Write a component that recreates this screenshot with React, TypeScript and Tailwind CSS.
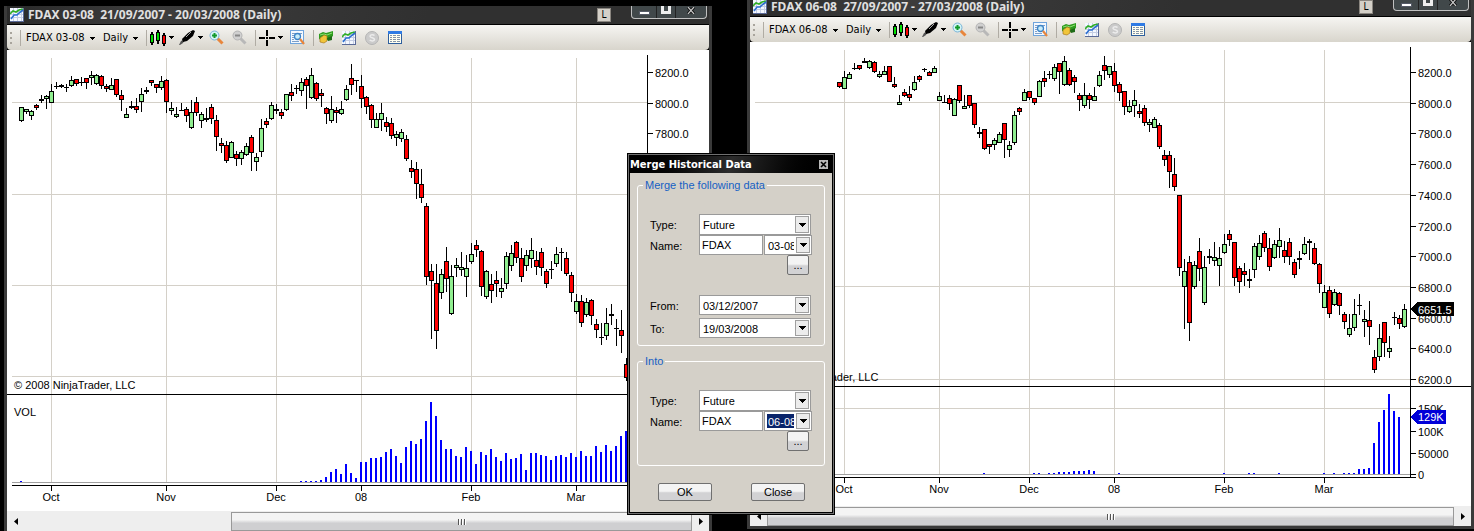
import React, { useState } from "react";

// Each bar: body top, body bottom, high, low, then u (up), d (down) or n (no change)
const MARCH_BARS = `107 121 107 122 u,109 112 109 114 u,111 116 110 120 u,105 108 104 110 d,99 101 95 103 n,96 99 95 109 u,91 103 84 103 u,
86 87 82 89 n,85 87 84 88 n,87 88 84 92 n,80 86 76 87 u,79 84 79 86 d,82 83 77 86 n,78 83 78 89 d,75 78 71 85 u,75 84 74 85 u,
76 86 75 89 d,86 89 84 92 d,85 90 78 90 u,79 95 79 97 d,95 100 90 111 d,114 118 108 118 u,106 108 101 109 n,106 110 98 113 d,
94 102 88 112 u,90 92 87 94 n,80 83 80 86 d,84 88 84 93 d,81 88 76 90 u,80 102 79 113 d,108 111 102 115 u,114 117 107 118 u,
110 111 103 111 n,109 116 107 122 d,112 128 100 129 u,102 113 97 116 d,114 121 112 128 u,118 120 108 122 n,107 119 104 124 d,
120 137 115 151 d,143 146 138 153 d,145 161 141 163 d,142 158 141 158 u,154 159 151 166 d,152 159 150 165 u,146 155 143 156 u,
137 153 135 171 d,157 162 153 171 u,128 152 119 157 u,121 125 118 128 d,105 119 102 120 u,109 111 104 114 n,112 116 109 119 d,
94 110 94 111 u,92 96 84 101 d,88 89 85 94 n,82 91 78 96 u,79 86 77 109 d,75 98 68 99 u,83 99 82 101 d,93 96 89 107 d,
108 114 107 124 d,109 121 96 123 u,110 113 107 123 d,109 114 101 115 u,89 100 85 101 u,78 85 64 95 d,80 81 80 92 n,86 99 75 108 d,
97 107 96 114 d,105 120 104 128 d,119 128 113 128 u,113 120 103 131 u,122 127 117 132 d,123 136 118 139 d,134 138 131 146 u,
132 139 129 142 u,139 159 135 161 d,168 172 160 178 d,169 184 162 199 d,184 198 169 203 d,206 277 203 285 d,271 281 264 339 d,
283 331 264 349 d,274 293 269 299 u,261 279 247 292 d,276 314 265 315 u,265 268 258 277 u,267 270 252 276 u,268 277 255 297 u,
254 262 243 264 u,245 250 240 257 d,251 287 250 296 d,271 297 270 299 u,284 291 274 303 d,280 284 271 297 d,288 292 278 298 u,
256 284 252 289 u,253 266 245 271 u,242 258 241 263 d,258 277 248 282 d,255 266 250 271 u,250 259 238 268 u,260 267 251 275 d,
252 268 248 276 d,271 284 269 288 d,269 270 261 279 n,254 264 247 267 u,252 253 248 271 n,258 274 252 276 d,275 293 272 302 d,
301 312 294 314 u,301 323 295 327 d,302 315 298 317 u,300 316 299 325 d,324 330 319 338 d,337 338 323 345 n,323 336 308 340 u,
314 316 304 325 n,328 329 319 346 n,330 336 310 353 d,364 378 358 381 d`;

const JUNE_BARS = `82 87 82 88 d,77 89 71 89 u,74 79 72 79 u,68 69 63 70 n,65 69 65 70 d,61 63 58 63 n,61 68 60 69 u,62 72 61 73 d,
74 77 71 78 u,71 75 66 75 u,66 82 66 82 d,84 87 77 88 d,102 105 95 105 u,92 96 89 97 d,94 98 86 101 d,82 90 76 91 u,76 80 75 82 d,
69 70 68 72 n,72 76 71 76 d,68 73 66 73 u,96 101 92 101 u,102 103 95 103 n,98 104 95 110 d,99 116 98 116 u,85 101 85 103 d,
106 109 95 109 u,95 106 95 108 d,103 125 103 128 d,132 134 127 138 n,129 149 129 150 d,144 147 144 154 d,140 145 138 150 u,
134 143 132 143 u,123 140 123 158 d,145 150 141 157 u,115 143 111 145 u,108 112 107 115 d,92 101 89 101 u,91 98 91 100 d,
98 103 98 105 d,81 97 80 97 u,78 82 71 87 d,74 75 71 79 n,67 79 64 81 u,63 72 63 94 d,61 85 56 86 u,70 85 68 86 d,77 82 75 93 d,
95 100 93 111 d,95 106 83 108 u,95 100 93 109 d,96 101 87 101 u,75 86 71 87 u,65 71 56 80 d,66 75 66 78 u,71 86 63 92 d,
84 93 82 101 d,91 107 91 115 d,106 112 100 113 u,100 106 90 117 u,111 114 104 118 d,108 123 105 126 d,122 125 119 132 u,
119 128 117 128 u,125 147 123 149 d,155 160 150 166 d,155 172 151 188 d,174 187 158 191 d,195 268 195 276 d,271 287 259 329 u,
262 323 256 341 d,265 287 261 289 u,251 269 238 281 d,267 303 256 305 u,256 258 249 264 n,257 261 242 266 u,258 266 247 286 u,
244 253 234 254 u,234 240 230 246 d,242 278 242 286 d,268 282 266 293 d,271 275 263 286 d,279 281 269 288 n,246 270 243 278 u,
243 257 235 260 u,233 248 231 252 d,248 267 238 271 d,244 258 240 259 u,240 247 228 258 u,250 257 241 263 d,242 257 238 265 d,
262 275 259 278 d,258 260 251 269 n,244 254 237 255 u,241 243 239 260 n,248 264 243 265 d,264 284 263 293 d,292 308 285 308 u,
290 314 286 318 d,292 305 289 306 u,293 306 292 315 d,314 322 312 329 d,328 335 314 337 u,314 328 299 331 u,305 306 294 315 n,
319 322 310 337 u,320 327 301 345 d,357 370 350 373 d,338 357 324 361 u,322 343 322 357 d,348 352 336 358 u,317 318 312 325 n,
318 324 315 329 d,309 327 304 328 u`;

// Volume bars: index of the first bar, then heights
const MARCH_VOLUME: [number, number[]][] = [
  [0, [1]],
  [
    56,
    [
      1, 1, 1, 1, 2, 5, 10, 13, 8, 18, 9, 4, 20, 20, 24, 24, 25, 30, 33, 26, 19, 35, 41, 38, 43, 61, 80, 66, 42, 33, 33,
      26, 25, 35, 31, 18, 30, 27, 33, 25, 21, 29, 23, 24, 28, 12, 29, 29, 27, 26, 22, 26, 27, 25, 29, 25, 31, 26, 26,
      36, 30, 37, 31, 36, 46, 51,
    ],
  ],
];

const JUNE_VOLUME: [number, number[]][] = [
  [29, [1]],
  [39, [1, 1, 0, 1, 1, 2, 2, 2, 3, 3, 3, 4, 3]],
  [56, [1]],
  [77, [1, 0, 0, 0, 0, 1, 1, 0, 0, 0, 0, 1]],
  [97, [1, 0, 1, 0, 1, 1, 1, 5, 5, 6, 31, 52, 64, 80, 63, 57]],
];

interface ChartProps {
  bars: string;
  volume: [number, number[]][];
  left: number;
  top: number;
  right: number;
  firstX: number;
  axisX: number;
  gridTop: number;
  months: [number, string][];
  prices: number[];
  gridLines: number[];
  split: number;
  volumeGrid?: number;
  zero: number;
  volumeTicks: [number, string][];
  credit: number;
  children?: React.ReactNode;
}

const Chart: React.FC<ChartProps> = (props) => {
  const { left, top, right, firstX, axisX, gridTop, split, zero } = props;

  return (
    <svg
      className="block w-full grow bg-white text-[11px]"
      fontFamily='"Liberation Sans", Arial, sans-serif'
      shapeRendering="crispEdges"
    >
      <g transform={`translate(${-left} ${-top})`}>
        {/* Grid */}
        <g fill="#d4d0c8">
          {props.months.map(([x]) => (
            <rect key={x} x={x} y={gridTop} width={1} height={zero - gridTop} />
          ))}
          {props.gridLines.map((y) => (
            <rect key={y} x={left + 5} y={y} width={axisX - left - 5} height={1} />
          ))}
          {props.volumeGrid && (
            <rect x={left + 5} y={props.volumeGrid} width={axisX - left - 5} height={1} />
          )}
        </g>

        {/* Axes */}
        <rect x={left} y={split} width={right - left} height={1} />
        <rect x={left + 5} y={zero} width={axisX - left + 1} height={1} fill="#a0a0a0" />
        <rect x={left + 5} y={zero + 3} width={axisX - left + 1} height={1} />
        <rect x={axisX} y={gridTop - 3} width={1} height={zero + 6 - gridTop} />
        {props.months.map(([x, label]) => (
          <g key={x}>
            <rect x={x} y={zero + 3} width={1} height={6} />
            <text x={x} y={zero + 19} textAnchor="middle">
              {label}
            </text>
          </g>
        ))}
        {props.prices.map((price, i) => {
          const y = Math.round(72 + i * 30.7);
          return (
            <g key={price}>
              <rect x={axisX} y={y} width={6} height={1} />
              <text x={axisX + 8} y={y + 5}>
                {price.toFixed(1)}
              </text>
            </g>
          );
        })}
        {props.volumeTicks.map(([y, label]) => (
          <g key={label}>
            <rect x={axisX} y={y} width={6} height={1} />
            <text x={axisX + 8} y={y + 5}>
              {label}
            </text>
          </g>
        ))}

        {/* Candles */}
        {props.bars.split(",").map((bar, i) => {
          const [a, b, c, d, kind] = bar.trim().split(" ");
          const [bodyTop, bodyBottom, high, low] = [a, b, c, d].map(Number);
          const x = firstX + i * 5;
          return (
            <g key={i}>
              <rect x={x} y={high} width={1} height={low - high} />
              <rect x={x - 2} y={bodyTop} width={5} height={bodyBottom - bodyTop} />
              {kind !== "n" && (
                <rect
                  x={x - 1}
                  y={bodyTop + 1}
                  width={3}
                  height={bodyBottom - bodyTop - 2}
                  fill={kind === "u" ? "#90ee90" : "#ff0000"}
                />
              )}
            </g>
          );
        })}

        {/* Volume */}
        {props.volume.map(([start, heights]) =>
          heights.map((h, i) => (
            <rect key={start + i} x={firstX - 1 + (start + i) * 5} y={zero - h} width={2} height={h} fill="#0000ff" />
          ))
        )}

        <text x={left + 7} y={props.credit}>
          © 2008 NinjaTrader, LLC
        </text>
        <text x={left + 7} y={split + 22}>
          VOL
        </text>
        {props.children}
      </g>
    </svg>
  );
};

const ChartIcon: React.FC = () => (
  <svg width="14" height="14" viewBox="0 0 14 14" aria-hidden="true">
    <rect width="14" height="14" fill="#f4f8ff" />
    <path d="M0 3.5h14M0 6.5h14M0 9.5h14M3.5 0v14M7.5 0v14M11.5 0v14" stroke="#c4cde4" />
    <path d="M0 13.5h14M13.5 0v14" stroke="#5a6a98" />
    <path d="M0 6l3-3 3 1 3-2 4-1" fill="none" stroke="#2fae25" strokeWidth="1.6" />
    <path d="M1 11l3-4h3l2-2 4-3" fill="none" stroke="#2c6fd0" strokeWidth="1.6" />
  </svg>
);

const CandlesIcon: React.FC = () => (
  <svg width="16" height="16" viewBox="0 0 16 16" shapeRendering="crispEdges" aria-hidden="true">
    <path d="M1 2h2v13H1zM7 0h2v14H7zM13 3h2v13h-2z" />
    <path d="M0 4h4v9H0zM6 2h4v9H6zM12 5h4v9h-4z" />
    <path d="M1 5h2v7H1zM7 3h2v7H7z" fill="#00e000" />
    <path d="M13 6h2v7h-2z" fill="#ff0000" />
  </svg>
);

const PenIcon: React.FC = () => (
  <svg width="16" height="16" viewBox="0 0 16 16" aria-hidden="true">
    <path d="M0 15l2-4 2-1 1 1-1 2-3 2z" fill="#555" />
    <path d="M3 9l6-6 5-3 2 1-2 5-6 5-4 1z" />
    <path d="M7 7l5-5" stroke="#aaa" />
  </svg>
);

const ZoomIcon: React.FC<{ dim?: boolean }> = ({ dim }) => (
  <svg width="15" height="15" viewBox="0 0 15 15" aria-hidden="true">
    <path d="M8.5 8.500l5 5" stroke={dim ? "#b8b8b8" : "#e8863c"} strokeWidth="3" />
    <circle cx="5.500" cy="5.500" r="4.500" fill={dim ? "#d0d0d0" : "#d4f3f4"} stroke={dim ? "#b4b4b4" : "#7ab4d8"} />
    <path d={dim ? "M3 5.500h5" : "M3 5.500h5M5.500 3v5"} stroke={dim ? "#888" : "#129a2c"} strokeWidth="2" />
  </svg>
);

const CrossIcon: React.FC = () => (
  <svg width="16" height="16" viewBox="0 0 16 16" shapeRendering="crispEdges" aria-hidden="true">
    <path d="M0 7h6v2H0zM10 7h6v2h-6zM7 0h2v6H7zM7 10h2v6H7zM7 7h2v2H7z" />
  </svg>
);

const DataBoxIcon: React.FC = () => (
  <svg width="15" height="15" viewBox="0 0 15 15" aria-hidden="true">
    <rect x=".5" y=".5" width="13" height="13" fill="#f4f9ff" stroke="#6fa4dc" />
    <path d="M2 3.500h10M2 5.500h2M2 7.500h2M2 9.500h2M2 11.500h7" stroke="#7d9fc8" />
    <circle cx="7.500" cy="6.500" r="3" fill="#c8ecf8" stroke="#3c84c8" strokeWidth="1.300" />
    <path d="M10 9l4 5" stroke="#e8863c" strokeWidth="2.200" />
  </svg>
);

const MoneyIcon: React.FC = () => (
  <svg width="15" height="15" viewBox="0 0 15 15" aria-hidden="true">
    <path d="M0 4l4-2 3 1 7-2v5l-5 4-5 1-4-2z" fill="#2e9c1f" />
    <path d="M1 5l4-1 3 1 5-2" fill="none" stroke="#8ee070" />
    <path d="M1 8l4-3 3 1v5l-3 2-4-1z" fill="#f1c53a" stroke="#a8781c" strokeWidth=".7" />
    <path d="M8 8l5-2v4l-4 1z" fill="#1f6b18" />
  </svg>
);

const CoinIcon: React.FC = () => (
  <svg width="14" height="14" viewBox="0 0 14 14" aria-hidden="true">
    <circle cx="7" cy="7" r="6.500" fill="#cbcbcb" stroke="#b4b4b4" />
    <path d="M9.500 4.500c-1-1-4.500-1.200-4.500.7 0 2 4.500 1.200 4.500 3.300 0 1.900-3.600 1.700-4.800.5" fill="none" stroke="#ececec" strokeWidth="1.500" />
  </svg>
);

const TableIcon: React.FC = () => (
  <svg width="14" height="14" viewBox="0 0 14 14" shapeRendering="crispEdges" aria-hidden="true">
    <rect width="14" height="13" fill="#2e5f9e" />
    <rect width="14" height="3" fill="#2f7be4" />
    <rect x="1" y="3" width="12" height="9" fill="#fffff0" />
    <path d="M2 4h2v1H2zM5 4h3v1H5zM9 4h3v1H9zM2 6h2v1H2zM5 6h3v1H5zM9 6h3v1H9zM2 8h2v1H2zM5 8h3v1H5zM9 8h3v1H9zM2 10h2v1H2zM5 10h3v1H5zM9 10h3v1H9z" fill="#8494a8" />
  </svg>
);

const Caret: React.FC = () => (
  <svg width="5" height="3" viewBox="0 0 5 3" shapeRendering="crispEdges" aria-hidden="true">
    <path d="M0 0h5v1H0zM1 1h3v1H1zM2 2h1v1H2z" />
  </svg>
);

const Separator: React.FC = () => <span className="h-4 w-px bg-[#b0aca4]" />;

const Toolbar: React.FC<{ symbol: string }> = ({ symbol }) => (
  <div className="flex h-[25px] shrink-0 items-center overflow-hidden rounded-b-sm bg-linear-to-b from-[#f6f5f2] to-[#d8d5cc] pl-[3px] text-[11px] text-black">
    <span className="flex w-[3px] flex-col gap-[3px]">
      <i className="size-[2px] bg-[#a8a49c]" />
      <i className="size-[2px] bg-[#a8a49c]" />
      <i className="size-[2px] bg-[#a8a49c]" />
    </span>
    <span className="ml-[7px] flex">
      <Separator />
    </span>
    <button className="ml-[5px] flex w-[69px] items-center justify-between whitespace-nowrap pt-[2px]">
      {symbol}
      <Caret />
    </button>
    <button className="mx-2 flex w-[35px] items-center justify-between pt-[2px]">
      Daily
      <Caret />
    </button>
    <Separator />
    <button className="ml-[3px] flex w-6 items-center justify-between" aria-label="Chart style">
      <CandlesIcon />
      <Caret />
    </button>
    <button className="ml-[5px] flex w-6 items-center justify-between" aria-label="Drawing tools">
      <PenIcon />
      <Caret />
    </button>
    <button className="ml-[6px]" aria-label="Zoom in">
      <ZoomIcon />
    </button>
    <button className="mx-2" aria-label="Zoom out">
      <ZoomIcon dim />
    </button>
    <Separator />
    <button className="ml-[3px] flex w-6 items-center justify-between" aria-label="Cursor">
      <CrossIcon />
      <Caret />
    </button>
    <button className="ml-[7px] mr-2" aria-label="Data box">
      <DataBoxIcon />
    </button>
    <Separator />
    <div className="ml-[5px] flex items-center gap-2">
      <button aria-label="Chart trader">
        <MoneyIcon />
      </button>
      <button aria-label="Indicators">
        <ChartIcon />
      </button>
      <button className="ml-px" aria-label="Strategies">
        <CoinIcon />
      </button>
      <button className="ml-px" aria-label="Properties">
        <TableIcon />
      </button>
    </div>
  </div>
);

const TitleBar: React.FC<{ title: string }> = ({ title }) => (
  <div className="flex h-[19px] shrink-0 items-start justify-between border-b border-black bg-linear-105 from-[#2a2a2a] via-[#3d3d3d] via-20% to-[#303030] to-60% pl-[3px]">
    <div className="flex items-center gap-1 pt-[2px]">
      <ChartIcon />
      <h2 className="whitespace-pre font-['Noto_Sans',sans-serif] text-xs font-bold leading-[14px] text-[#e0e0e0]">
        {title}
      </h2>
    </div>
    <div className="flex items-start gap-5 pr-[2px]">
      <button className="mt-[2px] size-[14px] border border-[#8a8680] bg-[#d4d0c8] text-[10px] leading-3 text-black" aria-label="Link">
        L
      </button>
      <div className="flex h-[13px] w-[76px] rounded-b border-x border-b border-[#c0c0c0] bg-[#41484a]">
        <button className="flex w-[25px] justify-center border-r border-[#222] pt-[5px]" aria-label="Minimize">
          <span className="h-1 w-[11px] border border-[#555a66] bg-white" />
        </button>
        <button className="flex w-[19px] justify-center border-r border-[#222]" aria-label="Restore">
          <span className="h-2 w-[10px] border-x-3 border-b-3 border-[#eee] bg-[#41484a]" />
        </button>
        <button className="flex grow items-start justify-center pt-[1px]" aria-label="Close window">
          <svg width="8" height="7" viewBox="0 0 8 7" aria-hidden="true">
            <path d="M1 0l6 7M7 0L1 7" stroke="#111" strokeWidth="3" />
            <path d="M1 0l6 7M7 0L1 7" stroke="#c8c8c8" strokeWidth="1.200" />
          </svg>
        </button>
      </div>
    </div>
  </div>
);

const ScrollArrow: React.FC<{ path: string; label: string }> = ({ path, label }) => (
  <button className="flex w-[17px] shrink-0 items-center justify-center" aria-label={label}>
    <svg width="4" height="7" viewBox="0 0 4 7" aria-hidden="true">
      <path d={path} />
    </svg>
  </button>
);

const ScrollBar: React.FC<{ thumb: string }> = ({ thumb }) => (
  <div className="flex h-5 shrink-0 bg-[#eeeeee]">
    <ScrollArrow path="M4 0v7L0 3.500z" label="Scroll left" />
    <div className="flex grow justify-end pt-px">
      <div
        className={`flex items-center justify-center gap-px border border-[#999] bg-linear-to-b from-[#f4f4f4] from-40% to-[#cfcfd1] to-60% ${thumb}`}
      >
        <i className="h-[6px] w-[2px] border-l border-[#555] bg-white" />
        <i className="h-[6px] w-[2px] border-l border-[#555] bg-white" />
        <i className="h-[6px] w-[2px] border-l border-[#555] bg-white" />
      </div>
    </div>
    <ScrollArrow path="M0 0v7l4-3.500z" label="Scroll right" />
  </div>
);

interface ComboProps {
  id: string;
  options: string[];
  className?: string;
  narrow?: boolean;
  selected?: boolean;
}

const Combo: React.FC<ComboProps> = ({ id, options, className = "h-5", narrow, selected }) => {
  const [value, setValue] = useState<string>(options[0]);

  return (
    <div
      className={`relative flex border border-[#9a9a9a] bg-white py-[2px] pr-[17px] ${narrow ? "w-12 pl-[2px]" : "w-28"} ${className}`}
    >
      <select
        id={id}
        aria-label={narrow ? "Expiry" : undefined}
        value={value}
        onChange={(e) => setValue(e.target.value)}
        className={`min-w-0 grow appearance-none overflow-hidden text-clip outline-none ${narrow ? "pl-px" : "pl-[3px]"} ${
          selected ? "bg-[#0a246a] text-white" : "bg-white"
        }`}
      >
        {options.map((option) => (
          <option key={option}>{option}</option>
        ))}
      </select>
      <span className="pointer-events-none absolute inset-y-px right-px flex w-[14px] items-center justify-center border border-[#a0a0a0] bg-[#ececec]">
        <svg width="7" height="4" viewBox="0 0 7 4" shapeRendering="crispEdges" aria-hidden="true">
          <path d="M0 0h7v1H0zM1 1h5v1H1zM2 2h3v1H2zM3 3h1v1H3z" />
        </svg>
      </span>
    </div>
  );
};

const buttonStyle = "rounded-[2px] border border-[#707070] bg-linear-to-b from-[#f4f4f4] from-45% to-[#d2d2d4] to-55%";
const fieldsetStyle = "rounded-[3px] border border-white pl-3";
const legendStyle = "-ml-[7px] px-[2px] text-[#1660c4] leading-[14px]";

const Instrument: React.FC<{ name: string; expiry: string; selected?: boolean }> = ({ name, expiry, selected }) => (
  <>
    <div className="flex items-center">
      <label htmlFor={`${name}-type`} className="w-[49px] pt-[2px]">
        Type:
      </label>
      <Combo id={`${name}-type`} options={["Future", "Stock", "Currency"]} className="h-[21px]" />
    </div>
    <div className="flex items-center">
      <label htmlFor={`${name}-symbol`} className="w-[49px] pt-[2px]">
        Name:
      </label>
      <input
        id={`${name}-symbol`}
        defaultValue="FDAX"
        className="mr-px h-5 w-16 border border-[#9a9a9a] bg-white px-[2px] outline-none"
      />
      <Combo id={`${name}-expiry`} options={[expiry]} narrow selected={selected} />
    </div>
    <button className={`ml-[137px] block h-5 w-[22px] ${buttonStyle}`} aria-label="Browse instruments">
      ...
    </button>
  </>
);

const MergeDialog: React.FC = () => (
  <div
    role="dialog"
    aria-labelledby="merge-title"
    className="absolute left-[627px] top-[153px] w-52 border border-black bg-black text-[11px] text-black"
  >
    <div className="border border-[#707070] p-px">
      <div className="flex h-[17px] items-center justify-between bg-linear-105 from-black via-[#2c2c2c] to-black pr-1">
        <h2 id="merge-title" className="text-[11px] font-bold leading-[14px] text-white">
          Merge Historical Data
        </h2>
        <button className="flex size-[9px] items-center justify-center bg-[#b8b8b8]" aria-label="Close dialog">
          <svg width="7" height="7" viewBox="0 0 7 7" aria-hidden="true">
            <path d="M1 1l5 5M6 1L1 6" stroke="#000" strokeWidth="1.600" />
          </svg>
        </button>
      </div>
      <form
        className="bg-[#d4d0c8] px-[7px] pb-[11px] pt-[5px] font-['Liberation_Sans',Arial,sans-serif]"
        onSubmit={(e) => e.preventDefault()}
      >
        <fieldset className={`${fieldsetStyle} pb-[7px]`}>
          <legend className={legendStyle}>Merge the following data</legend>
          <div className="pt-[22px]">
            <Instrument name="source" expiry="03-08" />
          </div>
          <div className="mt-5 flex items-center">
            <label htmlFor="from" className="w-[49px] pt-[2px]">
              From:
            </label>
            <Combo id="from" options={["03/12/2007"]} />
          </div>
          <div className="mt-[3px] flex items-center">
            <label htmlFor="to" className="w-[49px] pt-[2px]">
              To:
            </label>
            <Combo id="to" options={["19/03/2008"]} />
          </div>
        </fieldset>
        <fieldset className={`mt-2 pb-[14px] ${fieldsetStyle}`}>
          <legend className={legendStyle}>Into</legend>
          <div className="pt-[22px]">
            <Instrument name="target" expiry="06-08" selected />
          </div>
        </fieldset>
        <div className="mt-[17px] flex justify-between pl-[21px] pr-5">
          <button type="submit" className={`h-[18px] w-[54px] ${buttonStyle}`}>
            OK
          </button>
          <button type="button" className={`h-[18px] w-[54px] ${buttonStyle}`}>
            Close
          </button>
        </div>
      </form>
    </div>
  </div>
);

const App: React.FC = () => {
  return (
    <main className="relative grid h-screen w-full grid-cols-[708fr_727fr] gap-x-[35px] overflow-hidden bg-black pl-1 font-['DejaVu_Sans_Condensed','DejaVu_Sans',sans-serif]">
      <section className="mt-[6px] flex min-w-0 flex-col border-x-3 border-[#3a3a3a]">
        <TitleBar title="FDAX 03-08  21/09/2007 - 20/03/2008 (Daily)" />
        <Toolbar symbol="FDAX 03-08" />
        <Chart
          bars={MARCH_BARS}
          volume={MARCH_VOLUME}
          left={7}
          top={50}
          right={709}
          firstX={21}
          axisX={647}
          gridTop={58}
          months={[
            [51, "Oct"],
            [166, "Nov"],
            [276, "Dec"],
            [361, "08"],
            [471, "Feb"],
            [576, "Mar"],
          ]}
          prices={[8200, 8000, 7800]}
          gridLines={[102, 194, 285, 376]}
          split={394}
          zero={482}
          volumeTicks={[]}
          credit={389}
        />
        <ScrollBar thumb="w-[69%]" />
      </section>

      <section className="-mt-[2px] mb-[2px] flex min-w-0 flex-col border-x-3 border-b-3 border-[#3a3a3a]">
        <TitleBar title="FDAX 06-08  27/09/2007 - 27/03/2008 (Daily)" />
        <Toolbar symbol="FDAX 06-08" />
        <Chart
          bars={JUNE_BARS}
          volume={JUNE_VOLUME}
          left={750}
          top={42}
          right={1474}
          firstX={839}
          axisX={1410}
          gridTop={50}
          months={[
            [844, "Oct"],
            [939, "Nov"],
            [1029, "Dec"],
            [1114, "08"],
            [1224, "Feb"],
            [1324, "Mar"],
          ]}
          prices={[8200, 8000, 7800, 7600, 7400, 7200, 7000, 6800, 6600, 6400, 6200]}
          gridLines={[102, 194, 286, 379]}
          split={386}
          volumeGrid={408}
          zero={474}
          volumeTicks={[
            [408, "150K"],
            [431, "100K"],
            [453, "50000"],
            [474, "0"],
          ]}
          credit={381}
        >
          {/* Last price and last volume markers */}
          <path d="M1411 309l6-7h37v14h-37z" />
          <text x={1418} y={314} fill="#fff">
            6651.5
          </text>
          <path d="M1411 417l6-7h29v14h-29z" fill="#0000d8" />
          <text x={1418} y={421} fill="#fff">
            129K
          </text>
        </Chart>
        <ScrollBar thumb="w-full" />
      </section>

      <MergeDialog />
    </main>
  );
};

export default App;
